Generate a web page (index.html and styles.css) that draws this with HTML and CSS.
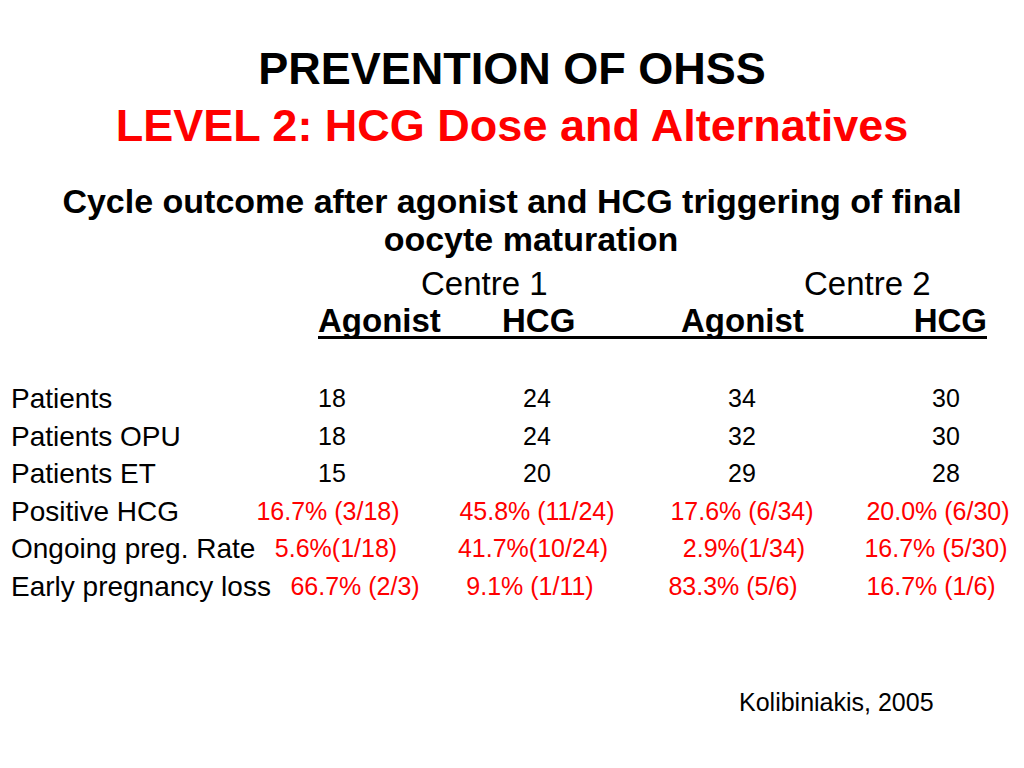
FILE: index.html
```html
<!DOCTYPE html>
<html lang="en">
<head>
<meta charset="utf-8">
<title>Prevention of OHSS</title>
<link rel="stylesheet" href="styles.css">
</head>
<body>
<main class="slide">
  <header class="title">
    <h1 class="title-main">PREVENTION OF OHSS</h1>
    <h2 class="title-sub">LEVEL 2: HCG Dose and Alternatives</h2>
  </header>

  <p class="subtitle"><span class="sub-line">Cycle outcome after agonist and HCG triggering of final</span> <span class="sub-line second">oocyte maturation</span></p>

  <div class="centres">
    <span>Centre 1</span>
    <span>Centre 2</span>
  </div>
  <div class="arms">
    <span>Agonist</span>
    <span>HCG</span>
    <span>Agonist</span>
    <span class="last">HCG</span>
  </div>

  <div class="table">
    <div class="row">
      <span class="label">Patients</span>
      <span class="num">18</span><span class="num">24</span><span class="num">34</span><span class="num">30</span>
    </div>
    <div class="row">
      <span class="label">Patients OPU</span>
      <span class="num">18</span><span class="num">24</span><span class="num">32</span><span class="num">30</span>
    </div>
    <div class="row">
      <span class="label">Patients ET</span>
      <span class="num">15</span><span class="num">20</span><span class="num">29</span><span class="num">28</span>
    </div>
    <div class="row">
      <span class="label">Positive HCG</span>
      <span class="val l8">16.7% (3/18)</span><span class="val">45.8% (11/24)</span><span class="val">17.6% (6/34)</span><span class="val l16">20.0% (6/30)</span>
    </div>
    <div class="row">
      <span class="label">Ongoing preg. Rate</span>
      <span class="val r8">5.6%(1/18)</span><span class="val l8">41.7%(10/24)</span><span class="val r4">2.9%(1/34)</span><span class="val l20">16.7% (5/30)</span>
    </div>
    <div class="row">
      <span class="label">Early pregnancy loss</span>
      <span class="val r46">66.7% (2/3)</span><span class="val l14">9.1% (1/11)</span><span class="val l18">83.3% (5/6)</span><span class="val l30">16.7% (1/6)</span>
    </div>
  </div>

  <p class="cite">Kolibiniakis, 2005</p>
</main>
</body>
</html>
```

FILE: styles.css
```css
html, body {
  margin: 0;
  padding: 0;
  background: #ffffff;
  overflow: hidden;
}

.slide {
  width: 1024px;
  height: 768px;
  overflow: hidden;
  padding-top: 40px;
  box-sizing: border-box;
  font-family: "Liberation Sans", Arial, Helvetica, sans-serif;
  color: #000000;
}

.title {
  text-align: center;
}

.title-main,
.title-sub {
  margin: 0;
  font-size: 45px;
  line-height: 57px;
  font-weight: bold;
}

.title-main {
  color: #000000;
}

.title-sub {
  color: #ff0000;
}

.subtitle {
  margin: 28px 0 0;
  font-size: 34px;
  line-height: 38px;
  font-weight: bold;
  text-align: center;
}

.sub-line {
  display: block;
}

.sub-line.second {
  padding-left: 38px;
}

.centres {
  margin: 7px 0 0 421px;
  display: grid;
  grid-template-columns: 383px auto;
  font-size: 33px;
  line-height: 38px;
}

.arms {
  margin: 2px 0 0 318px;
  width: 669px;
  display: grid;
  grid-template-columns: 184px 179px 232px auto;
  font-size: 33px;
  line-height: 31px;
  font-weight: bold;
  border-bottom: 3px solid #000000;
}

.arms .last {
  text-align: right;
}

.table {
  margin: 41px 0 0 11px;
  width: 1037px;
}

.row {
  display: grid;
  grid-template-columns: 219px 204px 206px 204px 204px;
  align-items: center;
  height: 37.6px;
}

.label {
  font-size: 28px;
  line-height: 37.6px;
  white-space: nowrap;
}

.num,
.val {
  font-size: 25px;
  line-height: 37.6px;
  text-align: center;
  white-space: nowrap;
}

.val {
  color: #ff0000;
}

/* fine nudges for cells that sit off the column centre */
.r4 { padding-left: 4px; }
.r8 { padding-left: 8px; }
.r46 { padding-left: 46px; }
.l8 { padding-right: 8px; }
.l14 { padding-right: 14px; }
.l16 { padding-right: 16px; }
.l18 { padding-right: 18px; }
.l20 { padding-right: 20px; }
.l30 { padding-right: 30px; }

.cite {
  margin: 81px 0 0 739px;
  font-size: 25px;
  line-height: 30px;
}
```
